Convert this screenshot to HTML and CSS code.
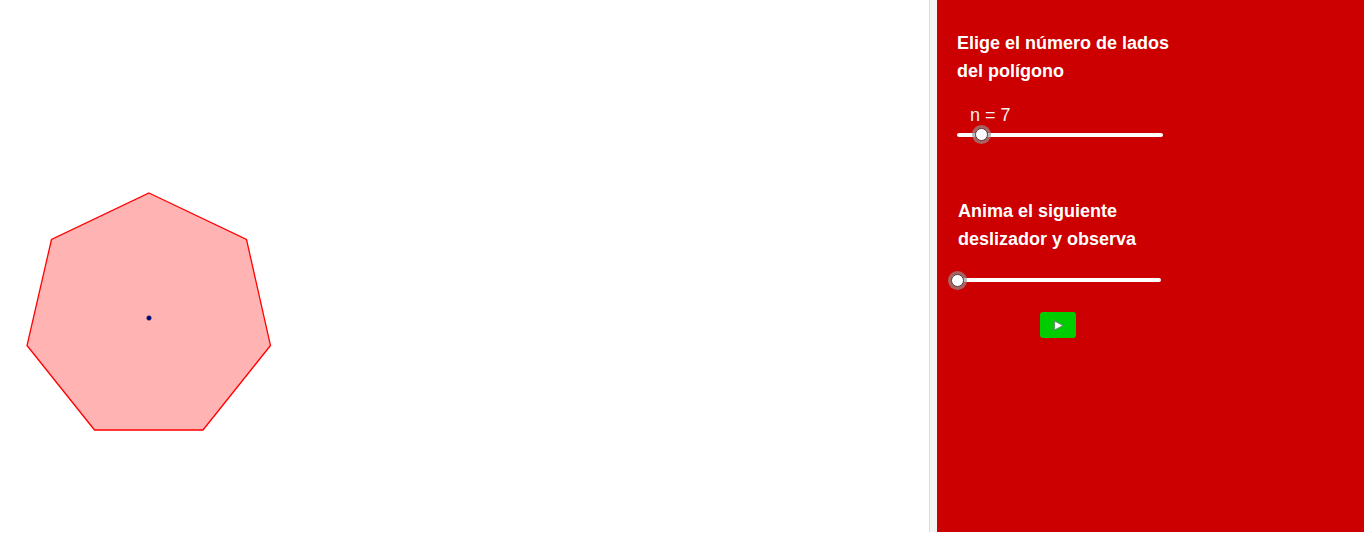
FILE: index.html
```html
<!DOCTYPE html>
<html lang="es">
<head>
<meta charset="utf-8">
<link rel="stylesheet" href="styles.css">
</head>
<body>
<div class="app">
  <div class="graphics">
    <svg class="poly" width="929" height="534" viewBox="0 0 929 534">
      <polygon points="149,193 246.5,239.5 270.5,345.5 203,430 94.5,430 27,345.5 51.5,239.5" fill="#ffb3b3" stroke="#ff0000" stroke-width="1.3" stroke-linejoin="miter"/>
      <circle cx="149" cy="318" r="2.3" fill="#00007f" stroke="#333366" stroke-width="0.6"/>
    </svg>
  </div>
  <div class="divider"></div>
  <div class="panel">
    <p class="label">Elige el número de lados<br>del polígono</p>
    <div class="slider-block first">
      <div class="value">n = 7</div>
      <div class="slider">
        <div class="track"></div>
        <div class="thumb thumb-n"></div>
      </div>
    </div>
    <p class="label second">Anima el siguiente<br>deslizador y observa</p>
    <div class="slider-block">
      <div class="slider s2">
        <div class="track"></div>
        <div class="thumb thumb-a"></div>
      </div>
    </div>
    <div class="play-row">
      <button class="play" type="button" aria-label="Reproducir">
        <svg width="11" height="11" viewBox="0 0 10 10"><polygon points="1.5,1 9,5 1.5,9" fill="#ffffff" stroke="#777" stroke-width="0.8"/></svg>
      </button>
    </div>
  </div>
</div>
</body>
</html>
```
FILE: styles.css
```css
html, body {
  margin: 0;
  padding: 0;
  background: #ffffff;
}
body {
  font-family: "Liberation Sans", Arial, sans-serif;
  width: 1366px;
  height: 534px;
  overflow: hidden;
}
.app {
  display: flex;
  height: 534px;
}
.graphics {
  width: 929px;
  height: 534px;
  flex: none;
  background: #ffffff;
}
.poly {
  display: block;
}
.divider {
  width: 7px;
  flex: none;
  height: 532px;
  background: #f4f4f4;
  border-left: 1px solid #dcdcdc;
}
.panel {
  width: 427px;
  height: 532px;
  flex: none;
  background: #cc0000;
  box-sizing: border-box;
  padding: 29px 0 0 20px;
  color: #ffffff;
}
.label {
  margin: 0;
  font-weight: bold;
  font-size: 18px;
  line-height: 28px;
  color: #ffffff;
}
.label.second {
  margin-top: 52px;
  padding-left: 1px;
}
.slider-block.first {
  margin-top: 20px;
}
.value {
  padding-left: 13px;
  font-size: 18px;
  line-height: 20px;
  color: #f2f2f2;
}
.slider {
  position: relative;
  width: 206px;
  height: 20px;
}
.s2 {
  margin-top: 17px;
  margin-left: -1px;
  width: 205px;
}
.track {
  position: absolute;
  left: 0;
  right: 0;
  top: 8px;
  height: 4px;
  border-radius: 2px;
  background: #ffffff;
}
.thumb {
  position: absolute;
  top: 3px;
  width: 11px;
  height: 11px;
  border-radius: 50%;
  background: #ffffff;
  border: 1px solid #5a3a3a;
  box-shadow: 0 0 0 3px rgba(150, 150, 150, 0.65);
}
.thumb-n {
  left: 18px;
  top: 3px;
}
.thumb-a {
  left: -5px;
  top: 4px;
}
.play-row {
  margin-top: 22px;
  padding-left: 83px;
}
.play {
  display: flex;
  align-items: center;
  justify-content: center;
  width: 36px;
  height: 26px;
  padding: 0;
  border: none;
  border-radius: 3px;
  background: #00cc00;
}
```
